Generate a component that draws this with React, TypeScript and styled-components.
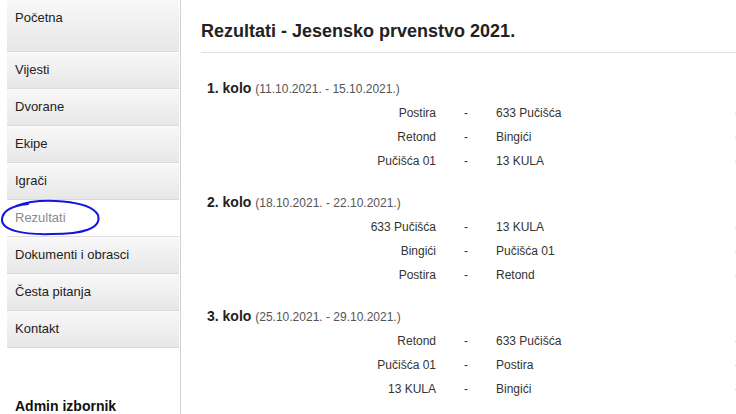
import React from "react";
import styled, { createGlobalStyle } from "styled-components";

const Global = createGlobalStyle`
  html, body { margin: 0; padding: 0; background: #fff; overflow: hidden; }
  body { font-family: Arial, "Liberation Sans", sans-serif; color: #222; }
`;

const Page = styled.div`
  display: flex;
  min-height: 414px;
  width: 736px;
  overflow: hidden;
`;

const Sidebar = styled.nav`
  position: relative;
  flex: 0 0 172px;
  padding: 0 1px 0 7px;
  border-right: 1px solid #d0d0d0;
  display: flex;
  flex-direction: column;
`;

const MenuItem = styled.div<{ $active?: boolean; $tall?: boolean }>`
  height: ${(p) => (p.$tall ? 52 : 37)}px;
  box-sizing: border-box;
  padding: 10px 8px 0;
  font-size: 13px;
  line-height: 15px;
  color: ${(p) => (p.$active ? "#8a8a8a" : "#222")};
  background: ${(p) =>
    p.$active ? "#fff" : "linear-gradient(to bottom, #f8f8f8 0%, #e7e7e7 100%)"};
  border-bottom: 1px solid ${(p) => (p.$active ? "#dcdcdc" : "#dadada")};
  box-shadow: ${(p) => (p.$active ? "none" : "inset 0 1px 0 #fbfbfb")};
`;

const AdminTitle = styled.div`
  margin-top: 50px;
  padding-left: 8px;
  font-size: 14px;
  line-height: 16px;
  font-weight: bold;
  color: #111;
`;

const Annotation = styled.svg`
  position: absolute;
  left: 0;
  top: 194px;
  width: 104px;
  height: 44px;
  pointer-events: none;
`;

const Main = styled.main`
  flex: 1;
  padding: 20px 0 0 20px;
  min-width: 0;
`;

const Heading = styled.h1`
  margin: 0;
  font-size: 18px;
  line-height: 22px;
  font-weight: bold;
  color: #222;
  padding-bottom: 10px;
  border-bottom: 1px solid #dedede;
`;

const Rounds = styled.div`
  padding-top: 25px;
  display: flex;
  flex-direction: column;
  gap: 19px;
`;

const Round = styled.section`
  display: flex;
  flex-direction: column;
`;

const RoundTitle = styled.div`
  padding-left: 6px;
  margin-bottom: 2px;
  font-size: 14px;
  line-height: 20px;
  font-weight: bold;
  color: #222;
`;

const RoundDates = styled.span`
  font-size: 12px;
  font-weight: normal;
  color: #555;
`;

const Row = styled.div`
  display: grid;
  grid-template-columns: 235px 60px 239px 20px;
  font-size: 12px;
  line-height: 24px;
  height: 24px;
  color: #333;
  white-space: nowrap;
`;

const Home = styled.span`
  text-align: right;
`;

const Dash = styled.span`
  text-align: center;
`;

const Away = styled.span``;

const Score = styled.span`
  color: #f0a040;
  font-size: 12px;
`;

const menu = [
  "Početna",
  "Vijesti",
  "Dvorane",
  "Ekipe",
  "Igrači",
  "Rezultati",
  "Dokumenti i obrasci",
  "Česta pitanja",
  "Kontakt",
];

const rounds = [
  {
    name: "1. kolo",
    dates: "(11.10.2021. - 15.10.2021.)",
    games: [
      ["Postira", "633 Pučišća"],
      ["Retond", "Bingići"],
      ["Pučišća 01", "13 KULA"],
    ],
  },
  {
    name: "2. kolo",
    dates: "(18.10.2021. - 22.10.2021.)",
    games: [
      ["633 Pučišća", "13 KULA"],
      ["Bingići", "Pučišća 01"],
      ["Postira", "Retond"],
    ],
  },
  {
    name: "3. kolo",
    dates: "(25.10.2021. - 29.10.2021.)",
    games: [
      ["Retond", "633 Pučišća"],
      ["Pučišća 01", "Postira"],
      ["13 KULA", "Bingići"],
    ],
  },
];

export default function App() {
  return (
    <>
      <Global />
      <Page>
        <Sidebar>
          {menu.map((m, i) => (
            <MenuItem key={m} $tall={i === 0} $active={m === "Rezultati"}>
              {m}
            </MenuItem>
          ))}
          <AdminTitle>Admin izbornik</AdminTitle>
          <Annotation viewBox="0 194 104 44">
            <path
              d="M 16 206 C 40 197, 90 200, 98 215 C 102 229, 82 234, 52 234 C 22 235, 2 230, 2 220 C 2 211, 10 206, 28 204"
              fill="none"
              stroke="#1414e0"
              strokeWidth="2"
              strokeLinecap="round"
            />
          </Annotation>
        </Sidebar>
        <Main>
          <Heading>Rezultati - Jesensko prvenstvo 2021.</Heading>
          <Rounds>
            {rounds.map((r) => (
              <Round key={r.name}>
                <RoundTitle>
                  {r.name} <RoundDates>{r.dates}</RoundDates>
                </RoundTitle>
                {r.games.map(([h, a]) => (
                  <Row key={h + a}>
                    <Home>{h}</Home>
                    <Dash>-</Dash>
                    <Away>{a}</Away>
                    <Score>-</Score>
                  </Row>
                ))}
              </Round>
            ))}
          </Rounds>
        </Main>
      </Page>
    </>
  );
}
